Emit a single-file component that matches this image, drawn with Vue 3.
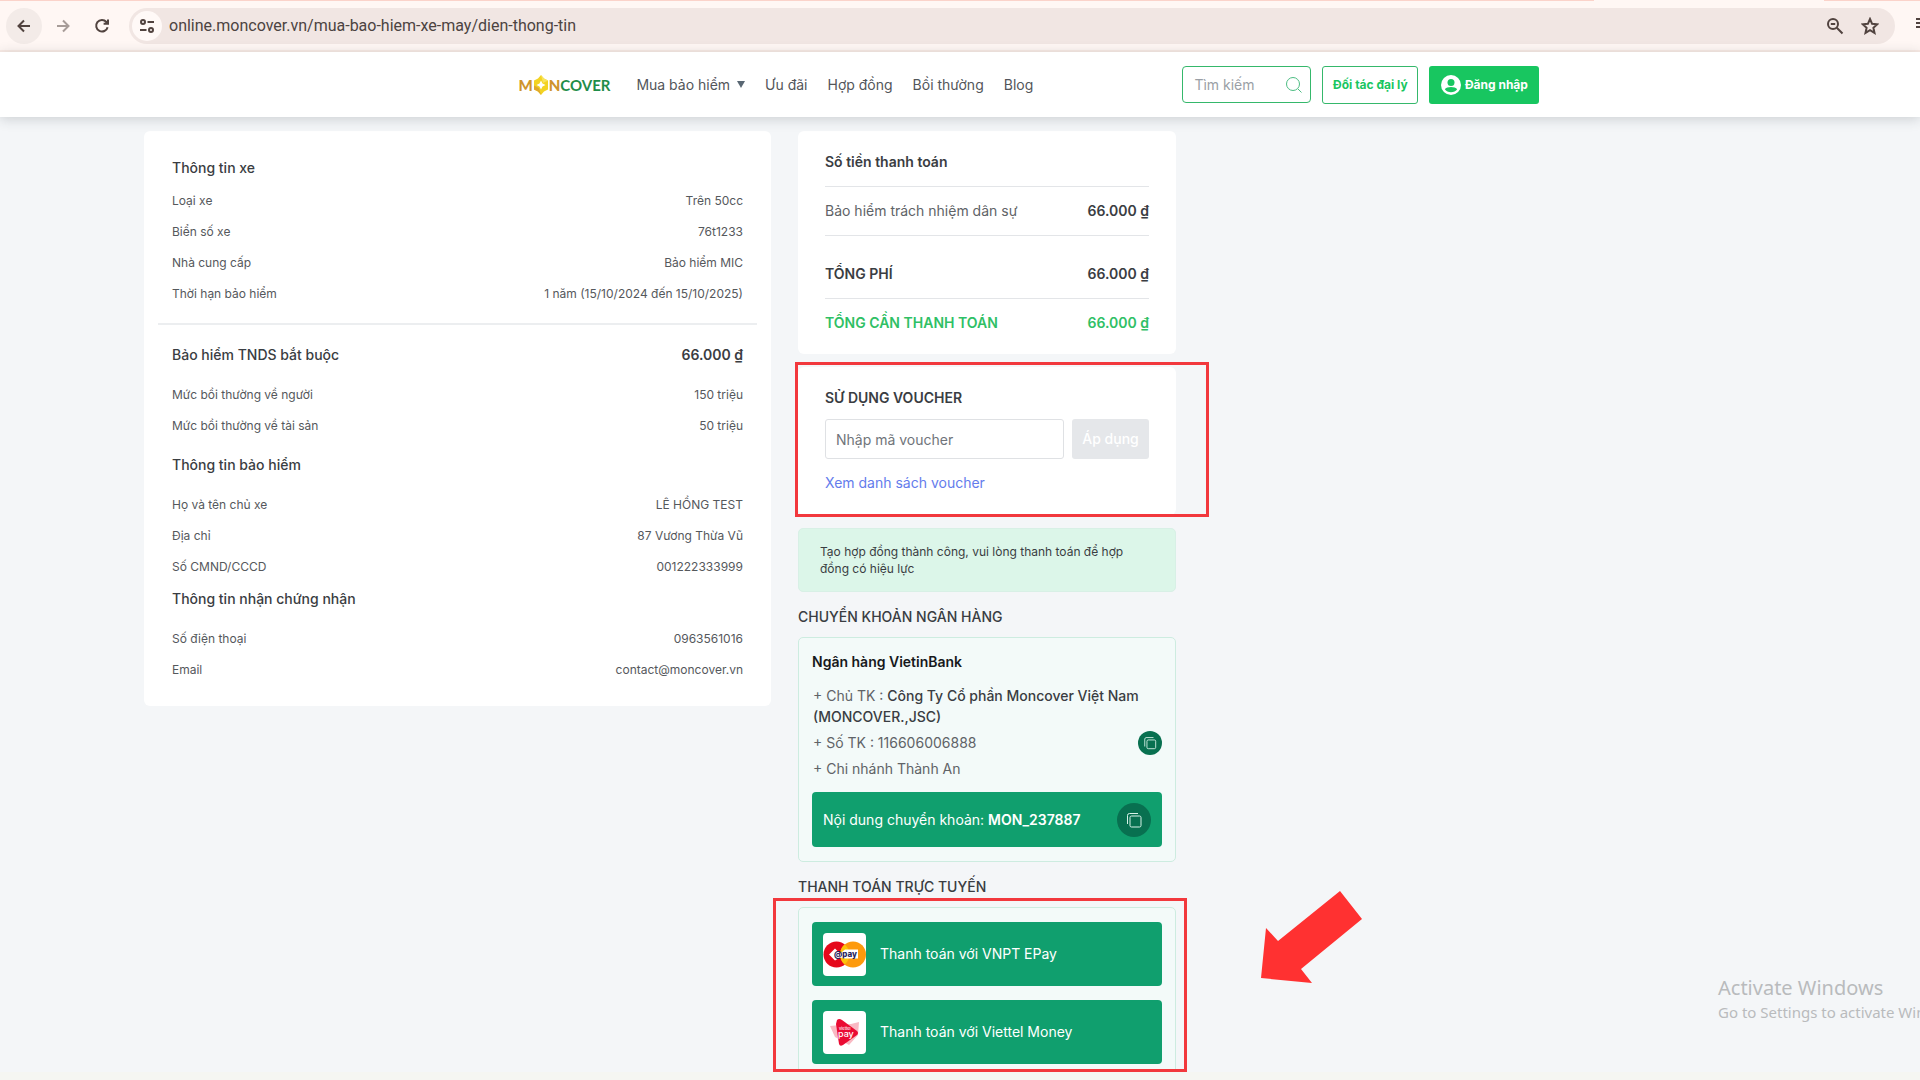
<script setup>
const navItems = ['Ưu đãi', 'Hợp đồng', 'Bồi thường', 'Blog']

const sections = [
  {
    title: 'Thông tin xe',
    rows: [
      ['Loại xe', 'Trên 50cc'],
      ['Biển số xe', '76t1233'],
      ['Nhà cung cấp', 'Bảo hiểm MIC'],
      ['Thời hạn bảo hiểm', '1 năm (15/10/2024 đến 15/10/2025)'],
    ],
    kind: 'lead',
  },
  {
    title: 'Bảo hiểm TNDS bắt buộc',
    price: '66.000 ₫',
    rows: [
      ['Mức bồi thường về người', '150 triệu'],
      ['Mức bồi thường về tài sản', '50 triệu'],
    ],
    kind: 'spaced',
  },
  {
    title: 'Thông tin bảo hiểm',
    rows: [
      ['Họ và tên chủ xe', 'LÊ HỒNG TEST'],
      ['Địa chỉ', '87 Vương Thừa Vũ'],
      ['Số CMND/CCCD', '001222333999'],
    ],
    kind: 'spaced',
  },
  {
    title: 'Thông tin nhận chứng nhận',
    rows: [
      ['Số điện thoại', '0963561016'],
      ['Email', 'contact@moncover.vn'],
    ],
    kind: 'plain',
  },
]
</script>

<template>
  <div class="screen">
    <div class="browser">
      <div class="tabs"></div>
      <button class="tool tool-back" aria-label="Back">
        <svg width="16" height="16" viewBox="0 0 16 16"><path d="M14 8H2.5M8 2.5 2.5 8 8 13.5" /></svg>
      </button>
      <button class="tool tool-off" aria-label="Forward">
        <svg width="16" height="16" viewBox="0 0 16 16"><path d="M2 8h11.5M8 2.5 13.5 8 8 13.5" /></svg>
      </button>
      <button class="tool" aria-label="Reload">
        <svg width="16" height="16" viewBox="0 0 16 16"><path d="M13.6 9.2A5.8 5.8 0 1 1 12.4 4l1.2 1.4M14 1.5v4.2H9.6" /></svg>
      </button>
      <div class="address">
        <button class="site" aria-label="Site information">
          <svg width="16" height="16" viewBox="0 0 16 16"><circle cx="4" cy="4" r="2" /><path d="M8.5 4H15M1 12h6.500" /><circle cx="12" cy="12" r="2" /></svg>
        </button>
        <span class="url">online.moncover.vn/mua-bao-hiem-xe-may/dien-thong-tin</span>
        <svg class="address-icon" width="18" height="18" viewBox="0 0 18 18"><circle cx="7" cy="7" r="5" /><path d="M10.800 10.800 16.500 16.500M4.800 7h4.400" /></svg>
        <svg class="address-icon" width="18" height="18" viewBox="0 0 18 18"><path d="m9 2 2.100 4.800 5.200.5-3.900 3.500 1.100 5.100L9 13.200l-4.500 2.700 1.100-5.100-3.900-3.500 5.200-.5z" /></svg>
      </div>
      <svg class="list" width="10" height="12" viewBox="0 0 10 12"><path d="M0 2h10M0 6h10M0 10h10" /></svg>
    </div>

    <header class="header">
      <div class="header-inner">
        <a class="logo" href="#" aria-label="Moncover">
          <span class="gold">M</span>
          <svg width="16" height="20" viewBox="0 0 16 20">
            <path d="M8 0 11 3.500 15 5.500V14.500L11 16.500 8 20 5 16.500 1 14.500V5.500L5 3.500z" fill="#f3d323" />
            <path d="M1 10.500 6 13l2 7-3-3.500-4-2z" fill="#e0a92c" />
            <path d="M8 0 11 3.500 15 5.500 10 8z" fill="#f8e45e" />
            <path d="m8 5.500 1.500 3 3 1.500-3 1.500-1.500 3-1.500-3-3-1.500 3-1.500z" fill="#fff" />
          </svg>
          <span class="gold">N</span><span class="green">COVER</span>
        </a>
        <nav class="nav">
          <a href="#">Mua bảo hiểm <i class="caret"></i></a>
          <a v-for="item in navItems" :key="item" href="#">{{ item }}</a>
        </nav>
        <div class="actions">
          <label class="search">
            <input type="text" placeholder="Tìm kiếm" aria-label="Tìm kiếm" />
            <svg width="18" height="18" viewBox="0 0 18 18"><circle cx="8" cy="8" r="6.500" /><path d="m13 13 3.500 3.500" /></svg>
          </label>
          <button class="partner">Đối tác đại lý</button>
          <button class="login">
            <svg width="20" height="20" viewBox="0 0 20 20"><circle cx="10" cy="10" r="10" fill="#fff" /><circle cx="10" cy="7.500" r="3.500" fill="#18c660" /><path d="M3.800 14.300c2-3.100 10.400-3.100 12.400 0-2.500 3.800-9.900 3.800-12.400 0z" fill="#18c660" /></svg>
            Đăng nhập
          </button>
        </div>
      </div>
    </header>

    <main class="main">
      <section class="card details">
        <div v-for="section in sections" :key="section.title" :class="['block', section.kind]">
          <h2>{{ section.title }} <strong v-if="section.price">{{ section.price }}</strong></h2>
          <dl>
            <div v-for="row in section.rows" :key="row[0]" class="row">
              <dt>{{ row[0] }}</dt>
              <dd>{{ row[1] }}</dd>
            </div>
          </dl>
        </div>
      </section>

      <div class="payment">
        <section class="card summary">
          <h2>Số tiền thanh toán</h2>
          <div class="sum"><span>Bảo hiểm trách nhiệm dân sự</span><strong>66.000 ₫</strong></div>
          <div class="sum fee"><strong>TỔNG PHÍ</strong><strong>66.000 ₫</strong></div>
          <div class="sum total"><strong>TỔNG CẦN THANH TOÁN</strong><strong>66.000 ₫</strong></div>
        </section>

        <section class="card voucher marked">
          <h2>SỬ DỤNG VOUCHER</h2>
          <div class="voucher-form">
            <input type="text" placeholder="Nhập mã voucher" aria-label="Mã voucher" />
            <button disabled>Áp dụng</button>
          </div>
          <a href="#">Xem danh sách voucher</a>
        </section>

        <p class="notice">Tạo hợp đồng thành công, vui lòng thanh toán để hợp đồng có hiệu lực</p>

        <h2 class="heading">CHUYỂN KHOẢN NGÂN HÀNG</h2>
        <section class="panel bank">
          <h3>Ngân hàng VietinBank</h3>
          <p>+ Chủ TK : <strong>Công Ty Cổ phần Moncover Việt Nam (MONCOVER.,JSC)</strong></p>
          <p class="account">
            + Số TK : 116606006888
            <button class="copy small" aria-label="Sao chép số tài khoản">
              <svg width="14" height="14" viewBox="0 0 16 16"><rect x="4.500" y="4.500" width="10" height="10" rx="1.500" /><path d="M2 12V3.500A2 2 0 0 1 3.500 1.800H12" /></svg>
            </button>
          </p>
          <p>+ Chi nhánh Thành An</p>
          <div class="transfer">
            <span>Nội dung chuyển khoản: <strong>MON_237887</strong></span>
            <button class="copy" aria-label="Sao chép nội dung">
              <svg width="16" height="16" viewBox="0 0 16 16"><rect x="4" y="4" width="11" height="11" rx="1.500" /><path d="M1.500 12V3.500a2 2 0 0 1 2-2H12" /></svg>
            </button>
          </div>
        </section>

        <h2 class="heading">THANH TOÁN TRỰC TUYẾN</h2>
        <section class="panel online marked">
          <button class="method">
            <svg width="43" height="43" viewBox="0 0 43 43">
              <rect width="43" height="43" rx="4" fill="#fff" />
              <circle cx="13.500" cy="21.500" r="13" fill="#e5091b" />
              <circle cx="30" cy="21.500" r="13" fill="#fd9a0c" />
              <path d="M21.700 11.500a13 13 0 0 1 0 20 13 13 0 0 1 0-20z" fill="#fdc30b" />
              <path d="m6 21.500 6-6 5 5 5-4h13v9H22l-5-1-5 3z" fill="#fff" />
              <text x="11" y="24" class="epay">@pay</text>
            </svg>
            Thanh toán với VNPT EPay
          </button>
          <button class="method">
            <svg width="43" height="43" viewBox="0 0 43 43">
              <rect width="43" height="43" rx="4" fill="#fff" />
              <path d="M7 15 28 13l8-2-1 13-9 10-14-8z" fill="#f9b9c3" />
              <path d="M14 9q2-2 5 0l15 11q2 2 0 4L20 34q-3 2-4-1l-3-20z" fill="#ea0b33" />
              <text x="16" y="19" class="viettel">viettel</text>
              <text x="15" y="26" class="vpay">pay</text>
            </svg>
            Thanh toán với Viettel Money
          </button>
        </section>
      </div>

      <svg class="pointer" width="102" height="94" viewBox="0 0 102 94"><path d="M79 0 101 28 40 78 51 92 0 87 5 37 17 50z" fill="#ff3131" /></svg>
    </main>

    <aside class="activation">
      <div class="activation-title">Activate Windows</div>
      <div class="activation-text">Go to Settings to activate Windows.</div>
    </aside>
  </div>
</template>

<style>
body {
  margin: 0;
  overflow: hidden;
}
</style>

<style scoped>
.screen {
  position: relative;
  display: flex;
  flex-direction: column;
  height: 100vh;
  overflow: hidden;
  background: #f5f6f2;
  color: #3a3d42;
  font: 14px/20px Inter, "Liberation Sans", sans-serif;
}
h2, h3, p, dl, dd {
  margin: 0;
}
h2, h3 {
  font-size: 14px;
  font-weight: 500;
}
strong {
  font-weight: 600;
}
a {
  color: inherit;
  text-decoration: none;
}
button, input {
  box-sizing: border-box;
  font: inherit;
}
button {
  border: 0;
  padding: 0;
}

.browser {
  position: relative;
  display: flex;
  flex: none;
  align-items: center;
  box-sizing: border-box;
  height: 52px;
  padding: 2px 0 0 6px;
  border-bottom: 2px solid #f9ebe5;
  background: #fff7f4;
}
.tabs {
  position: absolute;
  inset: 0 0 auto;
  height: 1px;
  background: linear-gradient(90deg, #fbd3ca 83%, #fff7f4 83%, #fff7f4 95%, #fbd3ca 95%);
}
.tool {
  display: grid;
  place-items: center;
  width: 36px;
  height: 36px;
  margin-right: 3px;
  border-radius: 50%;
  background: none;
}
.tool-back {
  background: #f3ebe8;
}
.tool-off {
  opacity: 0.5;
}
.browser svg {
  flex: none;
  fill: none;
  stroke: #51433f;
  stroke-width: 2;
}
.address {
  display: flex;
  flex: 1;
  align-items: center;
  height: 36px;
  margin: 0 21px 0 6px;
  padding: 0 16px 0 3px;
  border-radius: 18px;
  background: #f1e6e3;
}
.site {
  display: grid;
  place-items: center;
  width: 30px;
  height: 30px;
  border-radius: 50%;
  background: #fff9f7;
}
.url {
  flex: 1;
  margin-left: 7px;
  color: #4c4341;
  font: 16px/20px Roboto, "Noto Sans", sans-serif;
}
.address-icon {
  margin-left: 17px;
}
.list {
  margin: 0 -6px 6px 0;
}

.header {
  position: relative;
  z-index: 1;
  flex: none;
  padding-left: 27%;
  background: #fff;
  box-shadow: 0 2px 12px rgba(40, 50, 60, 0.2);
}
.header-inner {
  display: flex;
  align-items: center;
  max-width: 1021px;
  height: 65px;
}
.logo {
  display: flex;
  align-items: center;
  width: 118px;
  font: 600 15px/20px Lato, sans-serif;
}
.gold {
  color: #cf942c;
  font-weight: 900;
}
.green {
  color: #1f8d49;
  font-weight: 700;
}
.nav {
  display: flex;
  gap: 20px;
  color: #53565a;
}
.caret {
  display: inline-block;
  margin: 0 0 2px 3px;
  border: 4px solid transparent;
  border-top: 7px solid #596773;
  border-bottom: 0;
}
.actions {
  display: flex;
  align-items: center;
  gap: 11px;
  margin-left: auto;
}
.search {
  display: flex;
  align-items: center;
  box-sizing: border-box;
  width: 129px;
  height: 37px;
  padding: 0 7px 0 11px;
  border: 1px solid #35b86b;
  border-radius: 4px;
}
.search input {
  flex: 1;
  min-width: 0;
  padding: 0;
  border: 0;
  outline: 0;
  background: none;
}
.search input::placeholder {
  color: #9a9fa6;
}
.search svg {
  fill: none;
  stroke: #4dbd83;
}
.partner, .login {
  height: 38px;
  border-radius: 3px;
  font-size: 12px;
  font-weight: 700;
}
.partner {
  width: 96px;
  border: 1px solid #35b86b;
  background: #fff;
  color: #18c660;
}
.login {
  display: flex;
  align-items: center;
  justify-content: center;
  gap: 4px;
  width: 110px;
  background: #18c660;
  color: #fff;
}

.main {
  position: relative;
  display: grid;
  flex: 1;
  grid-template-columns: 627fr 378fr 573fr;
  gap: 27px;
  align-items: start;
  min-height: 0;
  margin-bottom: 8px;
  padding: 14px 144px 0;
  overflow: hidden;
  background: #f4f6f8;
}
.card {
  border-radius: 6px;
  background: #fff;
}
.details {
  padding: 20px 14px 21px;
}
.block {
  padding: 0 14px;
}
.block h2 {
  display: flex;
  justify-content: space-between;
  line-height: 34px;
}
.lead {
  padding-bottom: 14px;
  border-bottom: 2px solid #eceef0;
}
.lead + .spaced {
  margin-top: 6px;
}
.spaced h2 {
  padding: 7px 0;
}
.plain h2 {
  padding-bottom: 7px;
}
.row {
  display: flex;
  justify-content: space-between;
  color: #55585c;
  font-size: 12px;
  line-height: 31px;
}

.payment {
  min-width: 0;
}
.summary {
  padding: 0 27px 7px;
}
.summary h2 {
  padding: 7px 0 0;
  font-weight: 600;
  line-height: 48px;
}
.sum {
  display: flex;
  justify-content: space-between;
  border-top: 1px solid #e3e5e8;
  line-height: 48px;
}
.sum span {
  color: #606367;
}
.fee {
  padding-top: 14px;
}
.total {
  color: #2fc065;
}
.voucher {
  margin-top: 13px;
  padding: 21px 27px 22px;
}
.voucher h2 {
  font-weight: 600;
}
.voucher-form {
  display: flex;
  gap: 8px;
  margin: 11px 0 14px;
}
.voucher-form input {
  flex: 1;
  min-width: 0;
  height: 40px;
  padding: 0 10px;
  border: 1px solid #dfe1e4;
  border-radius: 3px;
  background: #fff;
}
.voucher-form input::placeholder {
  color: #70747a;
}
.voucher-form button {
  width: 77px;
  border-radius: 3px;
  background: #e5e7ea;
  color: #fff;
  font-weight: 500;
}
.voucher a {
  color: #647cec;
}
.marked {
  position: relative;
}
.marked::after {
  position: absolute;
  border: 3px solid #f2383d;
  content: "";
  pointer-events: none;
}
.voucher::after {
  inset: -5px -33px -2px -3px;
}
.notice {
  margin-top: 13px;
  padding: 14px 40px 14px 21px;
  border: 1px solid #d8f0e6;
  border-radius: 5px;
  background: #dcf6e9;
  font-size: 12px;
  line-height: 17px;
}
.heading {
  margin: 15px 0 10px;
}
.panel {
  padding: 14px 13px;
  border: 1px solid #cdece0;
  border-radius: 5px;
  background: #f3faf9;
}
.bank h3 {
  margin-bottom: 13px;
  color: #17191c;
  font-weight: 600;
}
.bank p {
  margin-bottom: 5px;
  padding-left: 1px;
  color: #606367;
  line-height: 21px;
}
.bank p strong {
  color: #3a3d42;
  font-weight: 500;
}
.bank .account {
  display: flex;
  align-items: center;
  justify-content: space-between;
}
.copy {
  display: grid;
  flex: none;
  place-items: center;
  width: 34px;
  height: 34px;
  border-radius: 50%;
  background: #087050;
}
.small {
  width: 24px;
  height: 24px;
  margin: -2px 0;
}
.account .small {
  margin: -1px 0 -2px;
}
.copy svg {
  fill: none;
  stroke: #d8f2e8;
}
.transfer {
  display: flex;
  align-items: center;
  justify-content: space-between;
  height: 55px;
  margin-top: 13px;
  padding: 0 11px;
  border-radius: 4px;
  background: #109f6e;
  color: #fff;
}
.online {
  display: grid;
  gap: 14px;
  padding-bottom: 30px;
}
.online::after {
  inset: -10px -12px auto -26px;
  height: 168px;
}
.method {
  display: flex;
  align-items: center;
  gap: 14px;
  height: 64px;
  padding: 0 11px;
  border-radius: 4px;
  background: #109f6e;
  color: #fff;
}
.epay {
  fill: #28245c;
  font: 800 8px Inter, sans-serif;
}
.viettel, .vpay {
  fill: #fff;
  font: 500 4px Inter, sans-serif;
}
.vpay {
  font-size: 9px;
}
.pointer {
  position: absolute;
  top: 774px;
  left: 1261px;
}
.activation {
  position: absolute;
  bottom: 57px;
  left: 1718px;
  z-index: 2;
  color: #b9bbbd;
  font-family: "Noto Sans", "Open Sans", sans-serif;
  white-space: nowrap;
}
.activation-title {
  font-size: 20px;
  line-height: 27px;
}
.activation-text {
  font-size: 15px;
  line-height: 22px;
}
</style>
